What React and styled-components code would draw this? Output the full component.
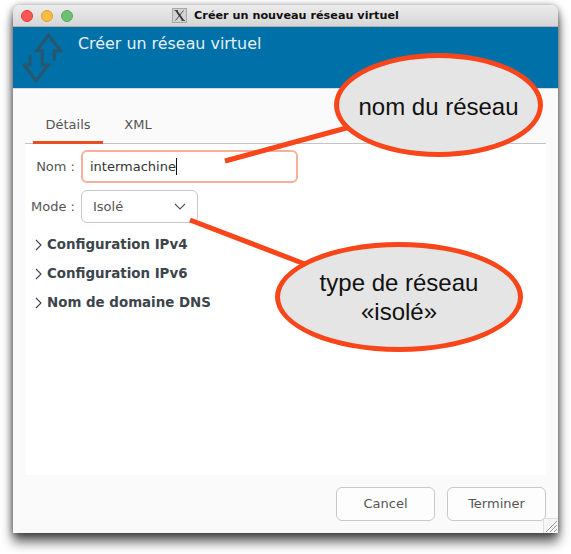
import React from 'react';
import styled, { createGlobalStyle } from 'styled-components';

const GlobalStyle = createGlobalStyle`
  html, body {
    margin: 0;
    background: #fff;
  }
  #root {
    width: 571px;
    height: 554px;
    overflow: hidden;
  }
`;

const Page = styled.div`
  position: relative;
  width: 571px;
  height: 554px;
  padding: 5px 13px 21px;
  box-sizing: border-box;
  font-family: "DejaVu Sans", sans-serif;
`;

const Window = styled.div`
  position: relative;
  display: flex;
  flex-direction: column;
  height: 528px;
  background: #fafafa;
  border-radius: 7px 7px 0 0;
  box-shadow: 0 9px 12px rgba(0, 0, 0, 0.62), 0 1px 7px rgba(0, 0, 0, 0.5);
`;

const TitleBar = styled.div`
  position: relative;
  display: flex;
  align-items: center;
  justify-content: center;
  height: 22px;
  flex: none;
  background: linear-gradient(#ececec, #d6d6d6);
  border-bottom: 1px solid #b1b1b1;
  border-radius: 7px 7px 0 0;
  box-sizing: border-box;
`;

const Lights = styled.div`
  position: absolute;
  left: 8px;
  top: 5px;
  display: flex;
  gap: 8px;
`;

const Light = styled.span`
  width: 12px;
  height: 12px;
  box-sizing: border-box;
  border-radius: 50%;
  background: ${p => p.$fill};
  border: 1px solid ${p => p.$edge};
`;

const TitleText = styled.span`
  margin-left: 7px;
  font-family: "DejaVu Sans", sans-serif;
  font-size: 11.23px;
  font-weight: 700;
  color: #111;
`;

const Banner = styled.div`
  display: flex;
  height: 62px;
  flex: none;
  box-sizing: border-box;
  padding: 0 0 0 10px;
  background: #0070a8;
  border-bottom: 1px solid #d8d8d8;
`;

const BannerTitle = styled.div`
  margin: 7px 0 0 15px;
  font-size: 15.9px;
  line-height: 20px;
  color: #e6f1f6;
`;

const Body = styled.div`
  display: flex;
  flex-direction: column;
  flex: 1;
  padding: 0 12px;
`;

const Tabs = styled.div`
  display: flex;
  height: 55px;
  flex: none;
  box-sizing: border-box;
  align-items: flex-end;
  padding-left: 8px;
  border-bottom: 1px solid #c4c4c4;
`;

const Tab = styled.div`
  box-sizing: border-box;
  width: ${p => p.$width}px;
  height: 38px;
  margin-bottom: -1px;
  padding-top: 10px;
  text-align: center;
  font-size: 13px;
  line-height: 18px;
  color: #555;
  border-bottom: 3px solid ${p => (p.$active ? '#e9501f' : 'transparent')};
`;

const Content = styled.div`
  display: flex;
  flex-direction: column;
  height: 331px;
  flex: none;
  box-sizing: border-box;
  padding: 6px 0 0 0;
  background: #fff;
`;

const FormRow = styled.div`
  display: flex;
  align-items: center;
  gap: 6px;
  margin-bottom: 7px;
`;

const Label = styled.div`
  width: 50px;
  text-align: right;
  font-size: 13px;
  color: #555;
`;

const NameInput = styled.div`
  display: flex;
  align-items: center;
  box-sizing: border-box;
  width: 217px;
  height: 33px;
  padding-left: 7px;
  font-size: 13px;
  color: #333;
  background: #fff;
  border: 2px solid #f8b09a;
  border-radius: 6px;
`;

const Caret = styled.span`
  width: 1px;
  height: 17px;
  background: #111;
`;

const Select = styled.div`
  display: flex;
  align-items: center;
  justify-content: space-between;
  box-sizing: border-box;
  width: 117px;
  height: 33px;
  padding: 0 11px;
  font-size: 13px;
  color: #555;
  background: #fff;
  border: 1px solid #c8c8c8;
  border-radius: 6px;
`;

const Expanders = styled.div`
  display: flex;
  flex-direction: column;
  gap: 12px;
  margin: 6px 0 0 10px;
`;

const Expander = styled.div`
  display: flex;
  align-items: center;
  gap: 5px;
  height: 17px;
  font-size: 13.4px;
  font-weight: 700;
  color: #3c444c;
`;

const Footer = styled.div`
  display: flex;
  justify-content: flex-end;
  gap: 12px;
  padding-top: 12px;
`;

const Button = styled.div`
  display: flex;
  align-items: center;
  justify-content: center;
  box-sizing: border-box;
  width: 99px;
  height: 34px;
  padding-bottom: 2px;
  font-size: 13px;
  color: #555;
  background: #fdfdfd;
  border: 1px solid #c8c8c8;
  border-radius: 6px;
`;

const Grip = styled.svg`
  position: absolute;
  right: 0;
  bottom: 0;
  background: #f6f6f6;
  border-left: 1px solid #ddd;
  border-top: 1px solid #ddd;
`;

const Callouts = styled.svg`
  position: absolute;
  left: 0;
  top: 0;
`;

const Bubble = styled.div`
  position: absolute;
  left: ${p => p.$x}px;
  top: ${p => p.$y}px;
  width: ${p => p.$w}px;
  height: ${p => p.$h}px;
  display: flex;
  align-items: center;
  justify-content: center;
  box-sizing: border-box;
  padding-top: ${p => p.$nudge || 0}px;
  text-align: center;
  font-family: "Liberation Sans", Arial, sans-serif;
  font-size: 24px;
  line-height: 29.5px;
  color: #111;
  background: #e5e5e5;
  border: 5px solid #f8461a;
  border-radius: 50%;
`;

function XIcon() {
  return (
    <svg width="15" height="15" viewBox="0 0 15 15">
      <rect x="0.5" y="0.5" width="14" height="14" fill="#d2d2d2" stroke="#a8a8a8" />
      <path d="M11.5 2.5 L3.5 12.5" fill="none" stroke="#444" strokeWidth="0.9" />
      <path d="M4.2 2.5 L11.2 12.5" fill="none" stroke="#333" strokeWidth="1.8" />
      <path d="M2.5 2.5 h3.5 M9.5 12.5 h3.5" fill="none" stroke="#444" strokeWidth="0.9" />
    </svg>
  );
}

function NetworkIcon() {
  return (
    <svg width="40" height="58" viewBox="0 0 40 58" fill="none" stroke="#28566f" strokeWidth="3">
      <path d="M31.3 33.7 V23.7 H37.7 L25.3 8 L13.7 23.7 H19.3 V38 H25.3 L13 53.7 L1.3 38 H7 V28" />
    </svg>
  );
}

function Chevron({ dir }) {
  if (dir === 'down') {
    return (
      <svg width="12" height="7" viewBox="0 0 12 7" fill="none" stroke="#555" strokeWidth="1.1">
        <path d="M1 1 L6 6 L11 1" />
      </svg>
    );
  }
  return (
    <svg width="7" height="12" viewBox="0 0 7 12" fill="none" stroke="#444" strokeWidth="1.1">
      <path d="M1 1 L6 6 L1 11" />
    </svg>
  );
}

export default function App() {
  return (
    <Page>
      <GlobalStyle />
      <Window>
        <TitleBar>
          <Lights>
            <Light $fill="#fc5753" $edge="#df3d39" />
            <Light $fill="#fdbc40" $edge="#de9f34" />
            <Light $fill="#6cc070" $edge="#5aa85e" />
          </Lights>
          <XIcon />
          <TitleText>Créer un nouveau réseau virtuel</TitleText>
        </TitleBar>
        <Banner>
          <NetworkIcon />
          <BannerTitle>Créer un réseau virtuel</BannerTitle>
        </Banner>
        <Body>
          <Tabs>
            <Tab $active $width={70}>Détails</Tab>
            <Tab $width={70}>XML</Tab>
          </Tabs>
          <Content>
            <FormRow>
              <Label>Nom :</Label>
              <NameInput>intermachine<Caret /></NameInput>
            </FormRow>
            <FormRow>
              <Label>Mode :</Label>
              <Select>
                Isolé
                <Chevron dir="down" />
              </Select>
            </FormRow>
            <Expanders>
              <Expander><Chevron />Configuration IPv4</Expander>
              <Expander><Chevron />Configuration IPv6</Expander>
              <Expander><Chevron />Nom de domaine DNS</Expander>
            </Expanders>
          </Content>
          <Footer>
            <Button>Cancel</Button>
            <Button>Terminer</Button>
          </Footer>
        </Body>
        <Grip width="14" height="14" viewBox="0 0 14 14" fill="none" stroke="#999">
          <path d="M2 13 L13 2 M6 13 L13 6 M10 13 L13 10" />
        </Grip>
      </Window>
      <Callouts width="571" height="554" viewBox="0 0 571 554" fill="none" stroke="#f8461a" strokeWidth="5">
        <path d="M225 161 L350 127" />
        <path d="M190 220 L310 266" />
      </Callouts>
      <Bubble $x={334} $y={53} $w={209} $h={104} $nudge={3}>nom du réseau</Bubble>
      <Bubble $x={275} $y={242} $w={248} $h={110} $nudge={0}>type de réseau<br />«isolé»</Bubble>
    </Page>
  );
}
